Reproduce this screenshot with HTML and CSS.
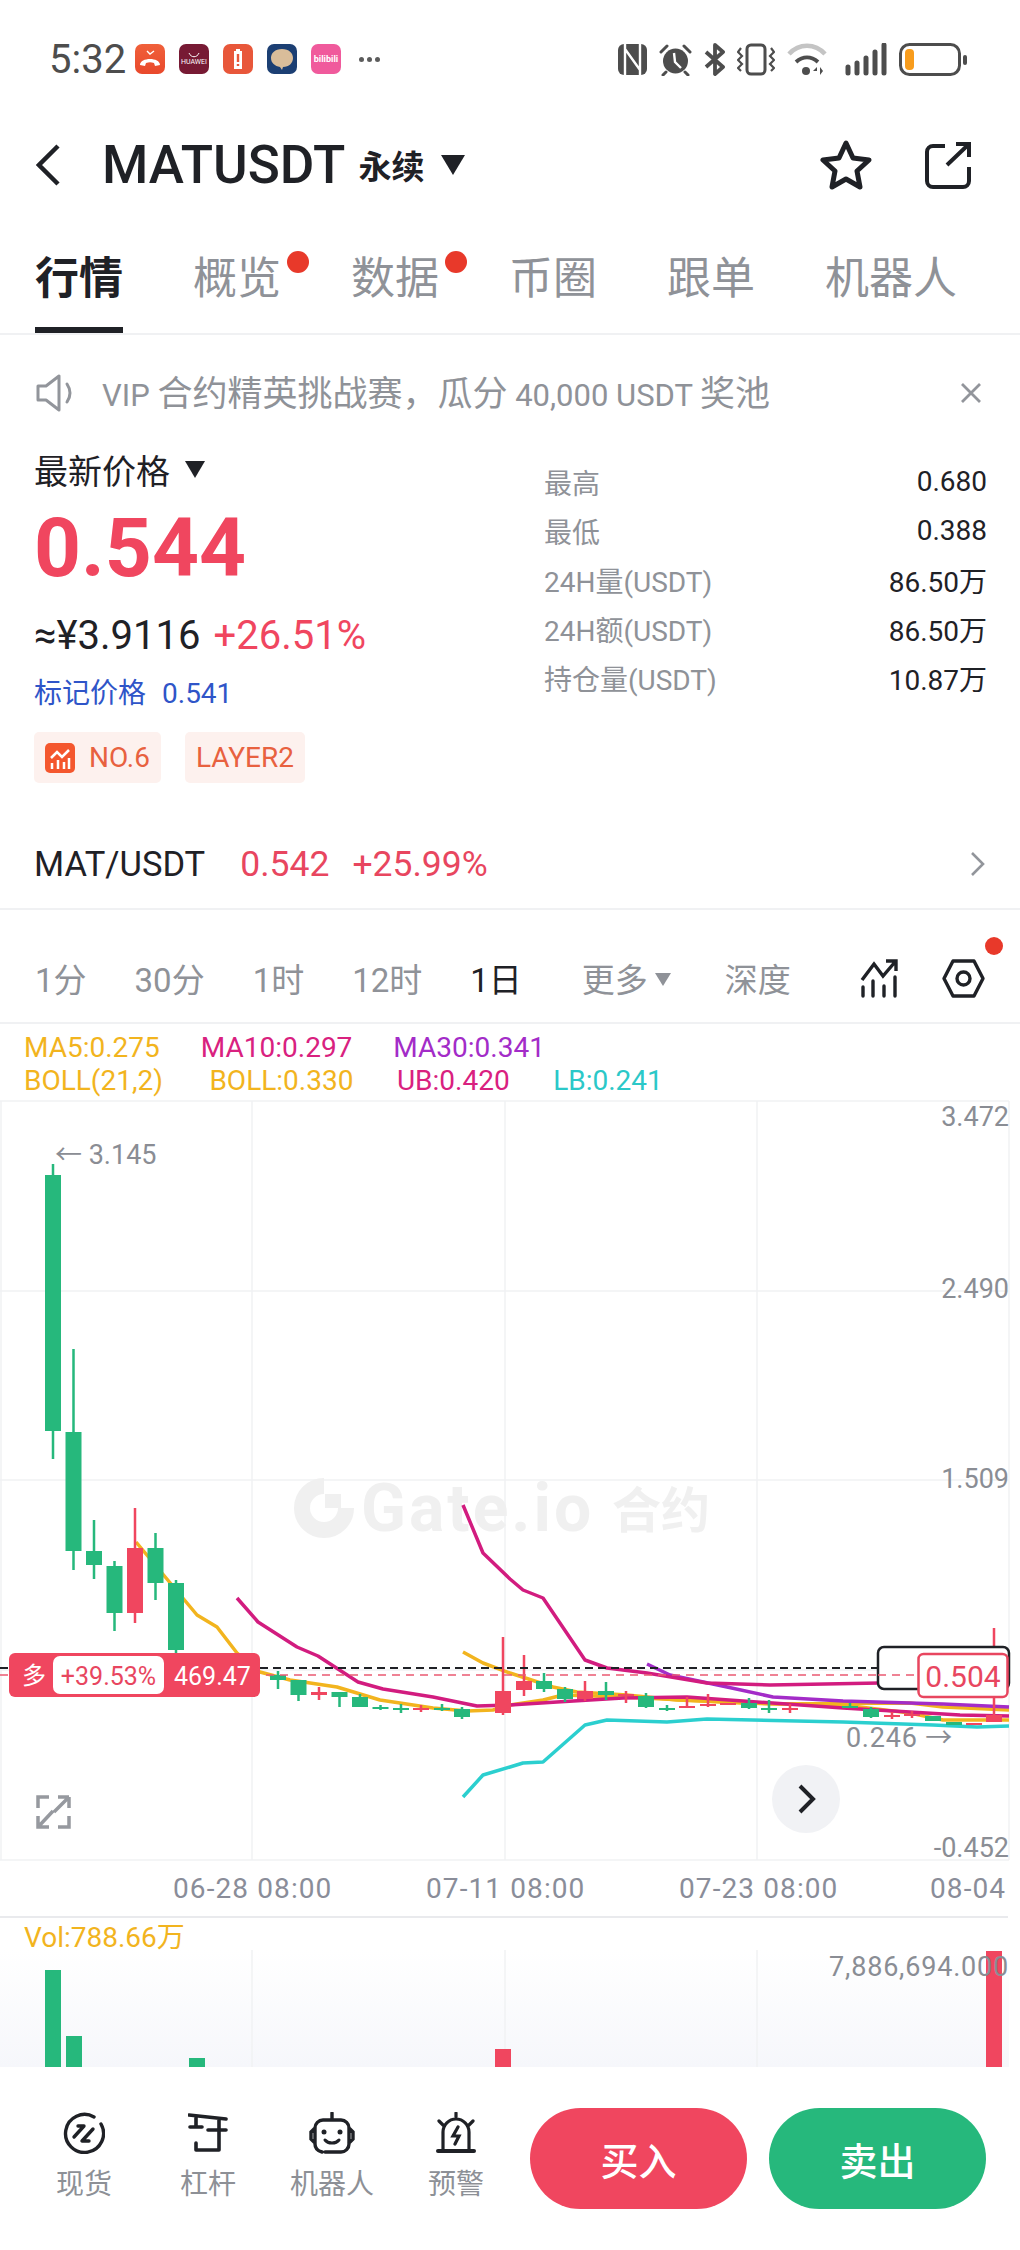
FILE: index.html

```html
<!DOCTYPE html>
<html lang="en">
<head>
  <meta charset="UTF-8">
  <meta name="viewport" content="width=device-width, initial-scale=1.0">
  <title>MATUSDT</title>
  <link rel="stylesheet" href="styles.css">
</head>
<body>
  <div id="status-bar">
    <span class="clock">5:32</span>
    <div class="app-icons">
      <div class="app-icon app-phone">
        <svg width="30" height="30" viewBox="0 0 30 30"><path d="M12 7l3 3 4-3" fill="none" stroke="#fff" stroke-width="1.4"/><path d="M5 21c0-8 20-8 20 0l-5 1-1-3c-3-1-5-1-8 0l-1 3z" fill="#fff"/></svg>
      </div>
      <div class="app-icon app-huawei">
        <svg width="14" height="6" viewBox="0 0 14 6"><path d="M2 1c2 5 8 5 10 0" fill="none" stroke="#fff" stroke-width="1"/></svg>
        <span>HUAWEI</span>
      </div>
      <div class="app-icon app-battery">
        <svg width="30" height="30" viewBox="0 0 30 30"><path d="M13 5h4v2h2v18h-8V7h2z" fill="#fff"/><path d="M15 10v8M15 20v2" stroke="#e8573a" stroke-width="2.4"/></svg>
      </div>
      <div class="app-icon app-chat">
        <svg width="30" height="30" viewBox="0 0 30 30"><path d="M15 5c7 0 11 4 11 9s-4 9-10 9l-1 3-2-3C8 22 4 19 4 14s4-9 11-9z" fill="#d9bd9a"/></svg>
      </div>
      <div class="app-icon app-bili"><span>bilibili</span></div>
    </div>
    <div class="more-dots"><i></i><i></i><i></i></div>
    <div class="status-icons">
      <svg width="29" height="31" viewBox="0 0 29 31"><rect x="0" y="0" width="29" height="31" rx="6" fill="#4d4d4d"/><path d="M7 0v31M22 0v31M7 5l15 21" stroke="#fff" stroke-width="2.4" fill="none"/></svg>
      <svg width="33" height="33" viewBox="0 0 33 33"><circle cx="16.500" cy="18" r="12.500" fill="#4d4d4d"/><path d="M15 10l1 9 6 6" fill="none" stroke="#fff" stroke-width="2.400"/><path d="M2 9l6-6M31 9l-6-6M7 29l-3 3M26 29l3 3" stroke="#4d4d4d" stroke-width="3" stroke-linecap="round"/></svg>
      <svg width="21" height="33" viewBox="0 0 21 33"><path d="M2 9l17 15-8 7V2l8 7L2 24" fill="none" stroke="#4d4d4d" stroke-width="3.800" stroke-linejoin="round"/></svg>
      <svg width="38" height="33" viewBox="0 0 38 33"><rect x="10" y="2" width="18" height="29" rx="4" fill="none" stroke="#4d4d4d" stroke-width="3"/><path d="M4 5L1 9l4 4-4 4 4 4-4 4 3 3M34 5l3 4-4 4 4 4-4 4 4 4-3 3" fill="none" stroke="#4d4d4d" stroke-width="2.200"/></svg>
      <svg width="40" height="33" viewBox="0 0 40 33"><path d="M2 11c10-11 26-11 36 0" fill="none" stroke="#c4c4c4" stroke-width="4.500"/><path d="M9 19c7-6 15-6 22 0" fill="none" stroke="#4d4d4d" stroke-width="4"/><circle cx="19" cy="28" r="4" fill="#4d4d4d"/><path d="M30 24l-4 4h4zM33 24v8l3-4z" fill="#4d4d4d"/></svg>
      <svg class="signal-icon" width="42" height="33" viewBox="0 0 42 33"><path d="M3 24v6M12 20v10M21 15v15M30 9v21M39 2v28" stroke="#4d4d4d" stroke-width="5" stroke-linecap="round"/></svg>
      <svg width="68" height="33" viewBox="0 0 68 33"><rect x="1.500" y="1.500" width="59" height="30" rx="9" fill="none" stroke="#4d4d4d" stroke-width="3"/><rect x="6" y="6" width="9" height="21" rx="4" fill="#f89c1c"/><rect x="64" y="12" width="4" height="10" rx="2" fill="#4d4d4d"/></svg>
    </div>
  </div>

  <div id="title-bar">
    <svg class="back-icon" width="24" height="42" viewBox="0 0 24 42"><path d="M22 2L3 21l19 19" fill="none" stroke="#1f2126" stroke-width="4.500"/></svg>
    <span class="pair-name">MATUSDT</span>
    <span class="pair-type">永续</span>
    <span class="caret caret-big"></span>
    <div class="title-actions">
      <svg width="52" height="50" viewBox="0 0 52 50"><path d="M26 3l7 15 16 2-12 11 3 16-14-8-14 8 3-16L3 20l16-2z" fill="none" stroke="#1f2126" stroke-width="5" stroke-linejoin="round"/></svg>
      <svg width="48" height="48" viewBox="0 0 48 48"><path d="M21 5H9a6 6 0 0 0-6 6v29a6 6 0 0 0 6 6h30a6 6 0 0 0 6-6V26M23 24L45 3M32 3h13v13" fill="none" stroke="#1f2126" stroke-width="4"/></svg>
    </div>
  </div>

  <div id="tabs">
    <div class="tab active">行情</div>
    <div class="tab">概览<i class="red-dot"></i></div>
    <div class="tab">数据<i class="red-dot"></i></div>
    <div class="tab">币圈</div>
    <div class="tab">跟单</div>
    <div class="tab">机器人</div>
  </div>

  <div id="notice">
    <svg width="40" height="38" viewBox="0 0 40 38"><path d="M2 12h8L23 2v34L10 26H2z" fill="none" stroke="#92959b" stroke-width="3" stroke-linejoin="round"/><path d="M31 10c4 6 4 12 0 18" fill="none" stroke="#92959b" stroke-width="3" stroke-linecap="round"/></svg>
    <span class="notice-text">VIP <span class="notice-cn">合约精英挑战赛，瓜分</span> 40,000 USDT <span class="notice-cn">奖池</span></span>
    <svg class="notice-close" width="22" height="22" viewBox="0 0 22 22"><path d="M2 2l18 18M20 2L2 20" stroke="#92959b" stroke-width="2.800"/></svg>
  </div>

  <div id="info">
    <div class="info-left">
      <div class="price-label">最新价格<span class="caret"></span></div>
      <div class="last-price">0.544</div>
      <div class="price-sub">≈¥3.9116<span class="change">+26.51%</span></div>
      <div class="mark-price">标记价格<span>0.541</span></div>
      <div class="tags">
        <div class="tag">
          <svg width="30" height="30" viewBox="0 0 30 30"><rect width="30" height="30" rx="5" fill="#f4572e"/><path d="M6 15l6-6 5 5 7-7" fill="none" stroke="#fff" stroke-width="2.500"/><path d="M7 20v6M13 17v9M19 19v7M24 15v11" stroke="#fff" stroke-width="2.500"/></svg>
          NO.6
        </div>
        <div class="tag">LAYER2</div>
      </div>
    </div>
    <div class="info-right">
      <div class="stat-row"><span>最高</span><b>0.680</b></div>
      <div class="stat-row"><span>最低</span><b>0.388</b></div>
      <div class="stat-row"><span>24H量(USDT)</span><b>86.50万</b></div>
      <div class="stat-row"><span>24H额(USDT)</span><b>86.50万</b></div>
      <div class="stat-row"><span>持仓量(USDT)</span><b>10.87万</b></div>
    </div>
  </div>

  <div id="spot-row">
    <span class="spot-name">MAT/USDT</span>
    <span class="spot-price">0.542</span>
    <span class="spot-price">+25.99%</span>
    <svg class="spot-arrow" width="15" height="26" viewBox="0 0 15 26"><path d="M2 2l11 11L2 24" fill="none" stroke="#92959b" stroke-width="2.600"/></svg>
  </div>

  <div id="periods">
    <span class="period">1分</span>
    <span class="period">30分</span>
    <span class="period">1时</span>
    <span class="period">12时</span>
    <span class="period active">1日</span>
    <span class="period period-more">更多<span class="caret caret-small"></span></span>
    <span class="period period-depth">深度</span>
    <div class="period-icons">
      <svg width="38" height="39" viewBox="0 0 38 39"><path d="M2 21L14 5l9 12L35 3M26 2h10v10" fill="none" stroke="#1f2126" stroke-width="3.400"/><path d="M3 28v9M13 22v15M24 27v10M35 18v19" stroke="#1f2126" stroke-width="3.400" stroke-linecap="round"/></svg>
      <div class="hex-wrap">
        <svg width="43" height="39" viewBox="0 0 43 39"><path d="M2 19.500L11 2h21l9 17.500L32 37H11z" fill="none" stroke="#1f2126" stroke-width="3.400" stroke-linejoin="round"/><circle cx="21.500" cy="19.500" r="6.500" fill="none" stroke="#1f2126" stroke-width="3.400"/></svg>
        <i class="red-dot small"></i>
      </div>
    </div>
  </div>

  <div id="legend">
    <div class="legend-row">
      <span class="c-yellow">MA5:0.275</span>
      <span class="c-pink">MA10:0.297</span>
      <span class="c-purple">MA30:0.341</span>
    </div>
    <div class="legend-row legend-boll">
      <span class="c-yellow">BOLL(21,2)</span>
      <span class="c-yellow">BOLL:0.330</span>
      <span class="c-pink">UB:0.420</span>
      <span class="c-cyan">LB:0.241</span>
    </div>
  </div>

  <svg id="chart" width="1020" height="967" viewBox="0 1100 1020 967">
    <defs>
      <linearGradient id="vol-bg" x1="0" y1="0" x2="0" y2="1">
        <stop offset="0" stop-color="#ffffff"/>
        <stop offset="1" stop-color="#f6f7fb"/>
      </linearGradient>
    </defs>

    <!-- grid -->
    <rect x="0" y="1950" width="1009" height="117" fill="url(#vol-bg)"/>
    <path class="grid" d="M0 1101H1009M0 1291H1009M0 1480H1009M0 1670H1009M0 1860H1009M1 1101V1860M252 1101V1860M505 1101V1860M757 1101V1860M1009 1101V1860M252 1950V2067M505 1950V2067M757 1950V2067"/>
    <path class="axis-line" d="M0 1917H1008"/>

    <!-- watermark -->
    <path class="wm-logo" d="M324 1486a22 22 0 1 0 22 22"/>
    <rect class="wm-square" x="325" y="1494" width="16" height="14"/>
    <text class="wm-text" x="361" y="1531">Gate.io</text>
    <text class="wm-cn" x="612" y="1528">合约</text>

    <!-- indicator lines -->
    <polyline class="line l-yellow" points="136,1542 197,1615 217,1627 237,1653 260,1672 290,1680 337,1687 380,1700 433,1708 467,1711 493,1710 510,1705 543,1700 563,1695 623,1697 743,1703 843,1705 910,1713 943,1720 1009,1720"/>
    <polyline class="line l-yellow" points="463,1652 483,1663 510,1673 553,1687 577,1692 627,1695 677,1700 777,1704 910,1703 943,1707 1009,1710"/>
    <polyline class="line l-purple" points="647,1664 670,1675 727,1687 773,1697 843,1701 943,1704 1009,1707"/>
    <polyline class="line l-pink" points="237,1598 258,1622 297,1647 318,1656 358,1682 383,1689 433,1697 477,1706 510,1705 557,1702 623,1698 687,1697 743,1701 843,1708 910,1712 960,1715 1009,1716"/>
    <polyline class="line l-pink" points="463,1505 483,1553 510,1579 523,1590 543,1598 585,1660 607,1668 647,1673 707,1683 770,1685 880,1683"/>
    <polyline class="line l-cyan" points="463,1797 483,1775 510,1767 523,1763 543,1762 585,1725 607,1720 667,1722 707,1719 843,1722 933,1725 977,1727 1009,1726"/>

    <!-- candles -->
    <path class="wick green" d="M53 1164V1459M73.500 1349V1570M94 1520V1579M114.500 1561V1631M155.500 1533V1600M176 1580V1655M278 1671V1689M298.500 1680V1701M339.500 1692V1707M360 1694V1707M380.500 1705V1710M401 1704V1713M442 1704V1711M462 1707V1719M544 1673V1692M565 1687V1702M606 1682V1700M646 1693V1708M667 1705V1711M749 1698V1709M769 1700V1713M850 1703V1708M871 1707V1718"/>
    <path class="wick red" d="M135 1508V1623M319 1687V1700M421 1705V1712M503 1637V1715M524 1655V1696M585 1681V1701M626 1691V1703M687 1697V1708M708 1694V1707M790 1704V1713M892 1712V1719M912 1711V1718M994 1628V1722"/>
    <path class="body green" d="M45 1175h16v256h-16zM65.500 1432h16v119h-16zM86 1551h16v14h-16zM106.500 1566h16v47h-16zM147.500 1548h16v35h-16zM168 1583h16v67h-16zM270 1675h16v5h-16zM290.500 1680h16v15h-16zM331.500 1692h16v5h-16zM352 1697h16v10h-16zM372.500 1707h16v2h-16zM393 1708h16v2h-16zM434 1708h16v2h-16zM454 1709h16v8h-16zM536 1681h16v8h-16zM557 1689h16v10h-16zM598 1691h16v4h-16zM638 1696h16v11h-16zM659 1708h16v2h-16zM741 1703h16v5h-16zM761 1708h16v2h-16zM842 1706h16v2h-16zM863 1709h16v8h-16zM925 1716h16v5h-16zM946 1722h16v3h-16z"/>
    <path class="body red" d="M127 1548h16v65h-16zM311 1692h16v3h-16zM413 1708h16v2h-16zM495 1691h16v22h-16zM516 1681h16v9h-16zM577 1691h16v8h-16zM618 1694h16v2h-16zM679 1706h16v2h-16zM700 1704h16v2h-16zM720 1703h16v2h-16zM782 1708h16v2h-16zM884 1715h16v2h-16zM904 1714h16v2h-16zM966 1723h16v2h-16zM986 1715h16v7h-16z"/>

    <!-- price lines -->
    <path class="dash-black" d="M0 1668H878"/>
    <path class="dash-pink" d="M0 1675H918"/>

    <!-- axis labels -->
    <text class="axis end" x="1009" y="1126">3.472</text>
    <text class="axis end" x="1009" y="1298">2.490</text>
    <text class="axis end" x="1009" y="1488">1.509</text>
    <text class="axis end" x="1009" y="1857">-0.452</text>
    <text class="axis" x="55" y="1164">← 3.145</text>
    <text class="axis axis-vol end" x="953" y="1747">0.246 →</text>
    <text class="axis-x" x="173" y="1898">06-28 08:00</text>
    <text class="axis-x" x="426" y="1898">07-11 08:00</text>
    <text class="axis-x" x="679" y="1898">07-23 08:00</text>
    <text class="axis-x" x="930" y="1898">08-04</text>

    <!-- position tag -->
    <rect class="long-tag" x="9" y="1653" width="251" height="44" rx="6"/>
    <rect class="long-pill" x="53" y="1656" width="111" height="38" rx="7"/>
    <text class="long-side" x="22" y="1684">多</text>
    <text class="long-pct" x="108.500" y="1685">+39.53%</text>
    <text class="long-value" x="174" y="1685">469.47</text>

    <!-- last price boxes -->
    <rect class="box-black" x="878" y="1647" width="131" height="42" rx="6"/>
    <path class="dash-pink" d="M878 1675H918"/>
    <rect class="box-red" x="918.500" y="1654" width="89" height="43" rx="5"/>
    <text class="box-price" x="963" y="1687">0.504</text>

    <!-- chart buttons -->
    <path class="fullscreen" d="M38 1808v-11h11M69 1808v-11M58 1797h11M38 1816v11h11M58 1827h11v-11M54 1812l14-14M53 1811l-14 15"/>
    <circle class="next-btn" cx="806" cy="1799" r="34"/>
    <path class="next-arrow" d="M800 1786l13 13-13 13"/>

    <!-- volume -->
    <text class="vol-label" x="24" y="1947">Vol:788.66万</text>
    <path class="body green" d="M45 1970h16v97h-16zM66 2036h16v31h-16zM189 2058h16v9h-16z"/>
    <path class="body red" d="M495 2049h16v18h-16zM986 1951h16v116h-16z"/>
    <text class="axis axis-vol end" x="1009" y="1976">7,886,694.000</text>
  </svg>

  <div id="bottom-bar">
    <div class="tool">
      <svg width="42" height="42" viewBox="0 0 42 42"><path d="M31 5A19 19 0 1 0 38 12" fill="none" stroke="#1f2126" stroke-width="3.400" stroke-linecap="round"/><path d="M15 14h6L11 25M30 17L19 29h7" fill="none" stroke="#1f2126" stroke-width="3.400" stroke-linecap="round" stroke-linejoin="round"/></svg>
      <span>现货</span>
    </div>
    <div class="tool">
      <svg width="40" height="42" viewBox="0 0 40 42"><path d="M1 3l37 4M8 5v10M2 15h12M20 18h18M31 7v31H8v-7" fill="none" stroke="#1f2126" stroke-width="3.600" stroke-linecap="round" stroke-linejoin="round"/></svg>
      <span>杠杆</span>
    </div>
    <div class="tool">
      <svg width="46" height="42" viewBox="0 0 46 42"><path d="M23 1v7M14 8h18a8 8 0 0 1 8 8v16a8 8 0 0 1-8 8H16M14 8a8 8 0 0 0-8 8v16c0 4 3 7 7 8M6 16l-4 4v7l4 4M40 16l4 4v7l-4 4" fill="none" stroke="#1f2126" stroke-width="3.400" stroke-linecap="round"/><circle cx="15" cy="20" r="2.500" fill="#1f2126"/><circle cx="31" cy="20" r="2.500" fill="#1f2126"/><path d="M16 28c3 4 11 4 14 0" fill="none" stroke="#1f2126" stroke-width="3" stroke-linecap="round"/></svg>
      <span>机器人</span>
    </div>
    <div class="tool">
      <svg width="40" height="42" viewBox="0 0 40 42"><path d="M2 39h36" stroke="#1f2126" stroke-width="4" stroke-linecap="round"/><path d="M7 38V20a13 13 0 0 1 26 0v18M22 15l-5 9h6l-4 8M20 1v4M3 9l4 4M37 9l-4 4" fill="none" stroke="#1f2126" stroke-width="3.200" stroke-linecap="round"/></svg>
      <span>预警</span>
    </div>
    <div class="trade-btn buy">买入</div>
    <div class="trade-btn sell">卖出</div>
  </div>
</body>
</html>
```

FILE: styles.css

```css
* {
  box-sizing: border-box;
}

body {
  margin: 0;
  width: 1020px;
  height: 2250px;
  overflow: hidden;
  background-color: #FFFFFF;
  font-family: Roboto, "Noto Sans CJK SC", sans-serif;
  color: #1f2126;
}

/* status bar */
#status-bar {
  display: flex;
  align-items: center;
  height: 118px;
  padding: 0 53px 0 49px;
}

.clock {
  font-size: 40px;
  color: #4d4d4d;
  width: 86px;
}

.app-icons {
  display: flex;
  gap: 14px;
}

.app-icon {
  position: relative;
  display: flex;
  flex-direction: column;
  align-items: center;
  justify-content: center;
  width: 30px;
  height: 30px;
  border-radius: 7px;
  overflow: hidden;
  color: #fff;
}

.app-phone { background: linear-gradient(#f0603a, #e9492c); }
.app-huawei { background: #771a34; font-size: 7px; line-height: 9px; }
.app-battery { background: #e8573a; }
.app-chat { background: #1c3f73; }
.app-bili { background: #f05a9c; font-size: 9px; font-weight: 700; }

.more-dots {
  display: flex;
  gap: 3px;
  margin-left: 18px;
}

.more-dots i {
  width: 5px;
  height: 5px;
  border-radius: 50%;
  background-color: #5c5c5c;
}

.status-icons {
  display: flex;
  align-items: center;
  gap: 12px;
  margin-left: auto;
}

.signal-icon {
  margin-left: 6px;
}

/* title */
#title-bar {
  display: flex;
  align-items: center;
  height: 94px;
  padding: 0 48px 0 36px;
}

.back-icon {
  margin-right: 42px;
}

.pair-name {
  font-size: 53px;
  font-weight: 500;
}

.pair-type {
  font-size: 33px;
  font-weight: 700;
  margin-left: 13px;
}

.caret {
  display: inline-block;
  width: 0;
  height: 0;
  margin-left: 16px;
  border-left: 10px solid transparent;
  border-right: 10px solid transparent;
  border-top: 17px solid #1f2126;
}

.caret-big {
  margin-left: 17px;
  border-left-width: 12px;
  border-right-width: 12px;
  border-top-width: 20px;
}

.caret-small {
  margin-left: 7px;
  border-left-width: 8px;
  border-right-width: 8px;
  border-top-width: 13px;
  border-top-color: #8f9298;
  vertical-align: 6px;
}

.title-actions {
  display: flex;
  align-items: center;
  gap: 52px;
  margin-left: auto;
}

/* tabs */
#tabs {
  display: flex;
  gap: 70px;
  height: 123px;
  padding: 33px 0 0 35px;
  border-bottom: 2px solid #f0f1f3;
}

.tab {
  position: relative;
  height: 88px;
  font-size: 44px;
  line-height: 68px;
  color: #8f9298;
}

.tab.active {
  color: #1f2126;
  font-weight: 700;
  border-bottom: 6px solid #1f2126;
}

.red-dot {
  position: absolute;
  top: 6px;
  right: -28px;
  width: 22px;
  height: 22px;
  border-radius: 50%;
  background-color: #e8392a;
}

.red-dot.small {
  top: -22px;
  right: -18px;
  width: 18px;
  height: 18px;
}

/* notice */
#notice {
  display: flex;
  align-items: center;
  height: 115px;
  padding: 0 38px 0 36px;
}

.notice-text {
  margin: -5px 0 0 26px;
  font-size: 31px;
  color: #8f9298;
}

.notice-cn {
  font-size: 35px;
}

.notice-close {
  margin-left: auto;
}

/* price info */
#info {
  display: flex;
  height: 334px;
}

.info-left {
  width: 544px;
  padding-left: 34px;
}

.price-label {
  font-size: 34px;
  line-height: 44px;
}

.price-label .caret {
  vertical-align: 6px;
  margin-left: 15px;
}

.last-price {
  margin-top: 6px;
  font-size: 82px;
  font-weight: 700;
  line-height: 96px;
  color: #f0465f;
}

.price-sub {
  margin-top: 18px;
  font-size: 40px;
  line-height: 44px;
}

.change {
  margin-left: 13px;
  color: #f0465f;
}

.mark-price {
  margin-top: 18px;
  font-size: 28px;
  line-height: 36px;
  color: #2f55c8;
}

.mark-price span {
  margin-left: 16px;
}

.tags {
  display: flex;
  gap: 24px;
  margin-top: 20px;
}

.tag {
  display: flex;
  align-items: center;
  gap: 14px;
  height: 51px;
  padding: 0 11px;
  border-radius: 5px;
  background-color: #fdf1ee;
  font-size: 28px;
  color: #e8613f;
}

.info-right {
  width: 443px;
  padding-top: 7px;
}

.stat-row {
  display: flex;
  justify-content: space-between;
  align-items: center;
  height: 49px;
  font-size: 28px;
  color: #8f9298;
}

.stat-row b {
  font-weight: 400;
  color: #1f2126;
}

/* spot row */
#spot-row {
  display: flex;
  align-items: center;
  height: 126px;
  padding: 35px 35px 0 34px;
  border-bottom: 2px solid #f0f1f3;
  font-size: 34.500px;
}

.spot-price {
  margin-left: 35px;
  font-size: 35.500px;
  color: #e8465f;
}

.spot-price + .spot-price {
  margin-left: 23px;
}

.spot-arrow {
  margin-left: auto;
}

/* periods */
#periods {
  display: flex;
  align-items: center;
  gap: 48px;
  height: 114px;
  padding: 24px 35px 0 35px;
  border-bottom: 2px solid #f0f1f3;
  font-size: 33px;
  color: #8f9298;
}

.period.active {
  color: #1f2126;
}

.period-more {
  margin-left: 12px;
}

.period-depth {
  margin-left: 6px;
}

.period-icons {
  display: flex;
  align-items: center;
  gap: 44px;
  margin-left: auto;
}

.hex-wrap {
  position: relative;
  height: 39px;
}

/* legend */
#legend {
  height: 76px;
  padding: 7px 0 0 24px;
  font-size: 28px;
}

.legend-row {
  display: flex;
  gap: 41px;
  line-height: 33px;
}

.legend-boll {
  gap: 43.500px;
}

.legend-boll span:first-child {
  margin-right: 3px;
}

.c-yellow { color: #f2b41e; }
.c-pink { color: #d9217f; }
.c-purple { color: #a32cc8; }
.c-cyan { color: #2bc8c8; }

/* chart */
#chart {
  display: block;
}

.grid {
  stroke: #f1f2f4;
  stroke-width: 1.5;
  fill: none;
}

.axis-line {
  stroke: #e9eaed;
  stroke-width: 2;
}

.wm-logo {
  fill: none;
  stroke: #f0f0f0;
  stroke-width: 16;
}

.wm-square {
  fill: #f0f0f0;
}

.wm-text {
  font-size: 66px;
  font-weight: 700;
  letter-spacing: 3px;
  fill: #f0f0f0;
}

.wm-cn {
  font-size: 49px;
  font-weight: 700;
  fill: #f0f0f0;
}

.line {
  fill: none;
  stroke-width: 3.5;
  stroke-linejoin: round;
}

.l-yellow { stroke: #f2b41e; }
.l-pink { stroke: #d21c7f; }
.l-purple { stroke: #a32cc8; }
.l-cyan { stroke: #2bcfcf; }

.wick {
  stroke-width: 2.5;
  fill: none;
}

.wick.green { stroke: #26b87c; }
.wick.red { stroke: #f0465f; }
.body.green { fill: #26b87c; }
.body.red { fill: #f0465f; }

.dash-black {
  stroke: #1f2126;
  stroke-width: 2;
  stroke-dasharray: 8 5;
}

.dash-pink {
  stroke: #ea5a72;
  stroke-width: 1.5;
  stroke-dasharray: 8 6;
}

.axis {
  font-size: 27px;
  fill: #8a8d94;
}

.axis.end {
  text-anchor: end;
}

.axis-vol {
  letter-spacing: 0.8px;
}

.axis-x {
  font-size: 28px;
  letter-spacing: 1.1px;
  fill: #8a8d99;
}

.long-tag { fill: #f0465f; }
.long-pill { fill: #fff; }

.long-side {
  font-size: 24px;
  fill: #fff;
}

.long-pct {
  font-size: 25px;
  fill: #e8465f;
  text-anchor: middle;
}

.long-value {
  font-size: 25px;
  fill: #fff;
}

.box-black {
  fill: #fff;
  stroke: #1f2126;
  stroke-width: 2.5;
}

.box-red {
  fill: #fff;
  stroke: #e8465f;
  stroke-width: 2.5;
}

.box-price {
  font-size: 30px;
  fill: #e8465f;
  text-anchor: middle;
}

.fullscreen {
  fill: none;
  stroke: #96999f;
  stroke-width: 3.5;
}

.next-btn { fill: #f1f2f5; }

.next-arrow {
  fill: none;
  stroke: #1f2126;
  stroke-width: 4;
}

.vol-label {
  font-size: 28px;
  fill: #f2b41e;
}

/* bottom */
#bottom-bar {
  display: flex;
  align-items: flex-start;
  height: 183px;
  padding: 41px 34px 0 22px;
}

.tool {
  display: flex;
  flex-direction: column;
  align-items: center;
  width: 124px;
  padding-top: 4px;
  font-size: 28px;
  color: #8d9096;
}

.tool span {
  margin-top: 12px;
  line-height: 38px;
}

.trade-btn {
  display: flex;
  align-items: center;
  justify-content: center;
  width: 217px;
  height: 101px;
  border-radius: 51px;
  font-size: 38px;
  font-weight: 500;
  color: #fff;
}

.trade-btn.buy {
  margin-left: 12px;
  background-color: #f0465f;
}

.trade-btn.sell {
  margin-left: 22px;
  background-color: #26b87c;
}
```
